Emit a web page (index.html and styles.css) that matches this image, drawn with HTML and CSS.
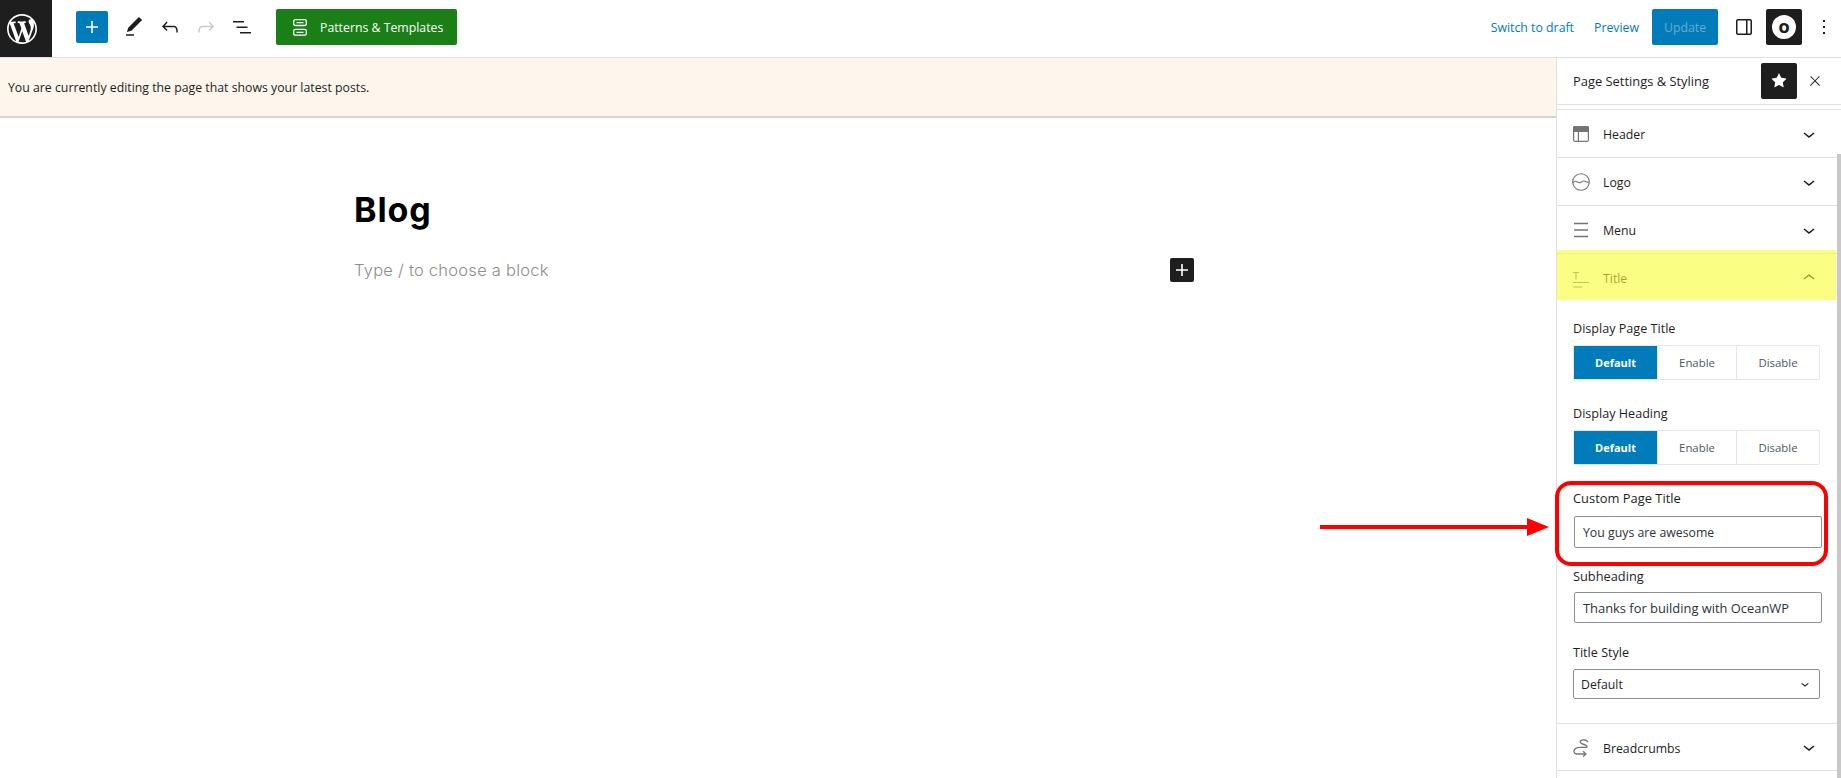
FILE: index.html
```html
<!DOCTYPE html>
<html lang="en">
<head>
  <meta charset="UTF-8" />
  <title>Edit Page - Blog</title>
  <link rel="stylesheet" href="styles.css">
</head>
<body>
  <div class="app">
    <header class="topbar">
      <div class="wp-logo">
        <svg viewBox="-2 -2 24 24" width="36" height="36"><path fill="#fff" d="M20 10c0-5.51-4.49-10-10-10C4.48 0 0 4.49 0 10c0 5.52 4.48 10 10 10 5.51 0 10-4.48 10-10zM7.78 15.37L4.37 6.22c.55-.02 1.17-.08 1.17-.08.5-.06.44-1.13-.06-1.11 0 0-1.45.11-2.37.11-.18 0-.37 0-.58-.01C4.12 2.69 6.87 1.11 10 1.11c2.33 0 4.45.87 6.05 2.34-.68-.11-1.65.39-1.65 1.58 0 .74.45 1.36.9 2.1.35.61.55 1.36.55 2.46 0 1.49-1.4 5-1.4 5l-3.03-8.37c.54-.02.82-.17.82-.17.5-.05.44-1.25-.06-1.22 0 0-1.44.12-2.38.12-.87 0-2.33-.12-2.33-.12-.5-.03-.56 1.2-.06 1.22l.92.08 1.26 3.41zM17.41 10c.24-.64.74-1.87.43-4.25.7 1.29 1.05 2.71 1.05 4.25 0 3.29-1.73 6.24-4.4 7.78.97-2.59 1.94-5.2 2.92-7.78zM6.1 18.09C3.12 16.65 1.11 13.53 1.11 10c0-1.3.23-2.48.72-3.59C3.25 10.3 4.67 14.2 6.1 18.09zm4.03-6.63l2.58 6.98c-.86.29-1.76.45-2.71.45-.79 0-1.57-.11-2.29-.33.81-2.38 1.62-4.74 2.42-7.1z"/></svg>
      </div>
      <div class="tools">
        <button class="add-btn"><svg viewBox="0 0 24 24" width="24" height="24"><path fill="#fff" d="M18 11.2h-5.2V6h-1.6v5.2H6v1.6h5.2V18h1.6v-5.2H18z"/></svg></button>
        <svg class="tool" viewBox="0 0 24 24" width="24" height="24"><path fill="#1e1e1e" d="M20.1 5.1L16.9 2 6.2 12.7l-1.3 4.4 4.5-1.3L20.1 5.1zM4 20.8h8v-1.5H4v1.5z"/></svg>
        <svg class="tool" viewBox="0 0 24 24" width="24" height="24"><path fill="#1e1e1e" d="M18.3 11.7c-.6-.6-1.4-.9-2.3-.9H6.7l2.9-3.3-1.1-1-4.5 5L8.5 16l1-1-2.7-2.7H16c.5 0 .9.2 1.3.5 1 1 1 3.4 1 4.5v.3h1.5v-.2c0-1.5 0-4.3-1.5-5.7z"/></svg>
        <svg class="tool" viewBox="0 0 24 24" width="24" height="24"><path fill="#ccc" d="M15.6 6.5l-1.1 1 2.9 3.3H8c-.9 0-1.7.3-2.3.9-1.4 1.5-1.4 4.2-1.4 5.6v.2h1.5v-.3c0-1.1 0-3.5 1-4.5.3-.3.7-.5 1.3-.5h9.2L14.5 15l1.1 1.1 4.6-4.6-4.6-5z"/></svg>
        <svg class="tool" viewBox="0 0 24 24" width="24" height="24"><path fill="#1e1e1e" d="M3 6h11v1.5H3V6Zm3.5 5.5h11V13h-11v-1.5ZM21 17H10v1.5h11V17Z"/></svg>
        <button class="patterns-btn">
          <svg viewBox="0 0 14 17" width="14" height="17" fill="none" stroke="#fff" stroke-width="1.3"><rect x="0.7" y="0.7" width="12.6" height="5.8" rx="1.5"/><rect x="0.7" y="10.4" width="12.6" height="5.8" rx="1.5"/><path d="M3.5 3.6h7M3.5 13.3h7"/></svg>
          Patterns &amp; Templates
        </button>
      </div>
      <div class="actions">
        <a class="link-btn">Switch to draft</a>
        <a class="link-btn">Preview</a>
        <button class="update-btn">Update</button>
        <svg class="panel-icon" viewBox="0 0 24 24" width="24" height="24"><path fill="#1e1e1e" d="M18 4H6c-1.1 0-2 .9-2 2v12c0 1.1.9 2 2 2h12c1.1 0 2-.9 2-2V6c0-1.1-.9-2-2-2zm-4 14.5H6c-.3 0-.5-.2-.5-.5V6c0-.3.2-.5.5-.5h8v13zm4.5-.5c0 .3-.2.5-.5.5h-2.5v-13H18c.3 0 .5.2.5.5v12z"/></svg>
        <div class="ocean-btn"><span class="ocean-o">O</span></div>
        <svg class="more-icon" viewBox="0 0 24 24" width="24" height="24"><path fill="#1e1e1e" d="M13 19h-2v-2h2v2zm0-6h-2v-2h2v2zm0-6h-2V5h2v2z"/></svg>
      </div>
    </header>

    <div class="main">
      <div class="editor">
        <div class="notice">You are currently editing the page that shows your latest posts.</div>
        <div class="canvas">
          <h1 class="page-title">Blog</h1>
          <div class="empty-block">
            <span class="placeholder">Type / to choose a block</span>
            <button class="inserter"><svg viewBox="0 0 24 24" width="24" height="24"><path fill="#fff" d="M18 11.2h-5.2V6h-1.6v5.2H6v1.6h5.2V18h1.6v-5.2H18z"/></svg></button>
          </div>
        </div>
      </div>

      <aside class="sidebar">
        <div class="sidebar-head">
          <span class="sidebar-title">Page Settings &amp; Styling</span>
          <div class="star-btn"><svg viewBox="0 0 24 24" width="24" height="24"><path fill="#fff" d="M11.776 4.454a.25.25 0 01.448 0l2.069 4.192a.25.25 0 00.188.137l4.626.672a.25.25 0 01.139.426l-3.348 3.263a.25.25 0 00-.072.222l.79 4.607a.25.25 0 01-.362.263l-4.138-2.175a.25.25 0 00-.232 0l-4.138 2.175a.25.25 0 01-.363-.263l.79-4.607a.25.25 0 00-.071-.222L4.754 9.881a.25.25 0 01.139-.426l4.626-.672a.25.25 0 00.188-.137l2.069-4.192z"/></svg></div>
          <svg class="close-icon" viewBox="0 0 24 24" width="16" height="16"><path fill="#1e1e1e" d="M13 11.8l6.1-6.3-1-1-6.1 6.2-6.1-6.2-1 1 6.1 6.3-6.5 6.7 1 1 6.5-6.6 6.5 6.6 1-1z"/></svg>
        </div>

        <div class="panel-row">
          <svg class="row-icon" viewBox="0 0 16 16"><path fill="#757575" d="M1.5 0h13A1.5 1.5 0 0 1 16 1.5V6H0V1.5A1.5 1.5 0 0 1 1.5 0Z"/><rect x="0.6" y="0.6" width="14.8" height="14.8" rx="1.5" fill="none" stroke="#757575" stroke-width="1.2"/><path fill="#757575" d="M4.8 6H6v9.5H4.8z"/></svg>
          <span class="row-label">Header</span>
          <svg class="chevron" viewBox="0 0 24 24"><path d="M17.5 11.6L12 16l-5.5-4.4.9-1.2L12 14l4.5-3.6 1 1.2z"/></svg>
        </div>
        <div class="panel-row">
          <svg class="row-icon row-icon-logo" viewBox="0 0 18 18" fill="none" stroke="#757575" stroke-width="1.1"><circle cx="9" cy="9" r="8.3"/><path d="M1 10c1-1.800 2.500-2.300 4-1.300s2.500 1.700 4 .6 2.500-2 4-1 2.500 1.500 4 .7"/></svg>
          <span class="row-label">Logo</span>
          <svg class="chevron" viewBox="0 0 24 24"><path d="M17.5 11.6L12 16l-5.5-4.4.9-1.2L12 14l4.5-3.6 1 1.2z"/></svg>
        </div>
        <div class="panel-row">
          <svg class="row-icon" viewBox="0 0 16 16" fill="none" stroke="#757575" stroke-width="1.3"><path d="M1 1.5h14M1 8h14M1 14.5h14"/></svg>
          <span class="row-label">Menu</span>
          <svg class="chevron" viewBox="0 0 24 24"><path d="M17.5 11.6L12 16l-5.5-4.4.9-1.2L12 14l4.5-3.6 1 1.2z"/></svg>
        </div>
        <div class="panel-row panel-row-open">
          <svg class="row-icon row-icon-title" viewBox="0 0 16 18" fill="none" stroke="#757575" stroke-width="1.1"><path d="M0 11.5h16M0 16h9M0 1.5h6M3 1.5v7"/></svg>
          <span class="row-label">Title</span>
          <svg class="chevron" viewBox="0 0 24 24"><path d="M6.5 12.4L12 8l5.5 4.4-.9 1.2L12 10l-4.500 3.600-1-1.200z"/></svg>
        </div>

        <div class="panel-body">
          <div class="field">
            <div class="field-label">Display Page Title</div>
            <div class="btn-group">
              <span class="seg seg-active">Default</span>
              <span class="seg">Enable</span>
              <span class="seg">Disable</span>
            </div>
          </div>
          <div class="field">
            <div class="field-label">Display Heading</div>
            <div class="btn-group">
              <span class="seg seg-active">Default</span>
              <span class="seg">Enable</span>
              <span class="seg">Disable</span>
            </div>
          </div>
          <div class="field field-custom">
            <div class="field-label">Custom Page Title</div>
            <div class="text-input">You guys are awesome</div>
          </div>
          <div class="field field-sub">
            <div class="field-label">Subheading</div>
            <div class="text-input">Thanks for building with OceanWP</div>
          </div>
          <div class="field field-last">
            <div class="field-label">Title Style</div>
            <div class="select-input">
              Default
              <svg viewBox="0 0 24 24" width="16" height="16"><path fill="#1e1e1e" d="M17.5 11.6L12 16l-5.5-4.4.9-1.2L12 14l4.5-3.6 1 1.2z"/></svg>
            </div>
          </div>
        </div>

        <div class="panel-row panel-row-top">
          <svg class="row-icon row-icon-crumbs" viewBox="0 0 16 18" fill="none" stroke="#757575" stroke-width="1.3"><path d="M15 3C14 1 9 0 7.5 2 6.500 4 9 5 11 5.500 14 6.300 15 8 13 8.300 10 8.800 5 7.500 2.500 9.500 0 11.500 .5 14.800 3.500 15H12.500"/><path d="M10 12.300L13 15 10 17.700"/></svg>
          <span class="row-label">Breadcrumbs</span>
          <svg class="chevron" viewBox="0 0 24 24"><path d="M17.5 11.6L12 16l-5.5-4.4.9-1.2L12 14l4.5-3.6 1 1.2z"/></svg>
        </div>

        <div class="scroll-thumb"></div>
      </aside>
    </div>

    <!-- screenshot annotations, they sit on top of the page -->
    <div class="highlight"></div>
    <div class="red-ring"></div>
    <svg class="red-arrow" viewBox="0 0 229 18" width="229" height="18"><path fill="#f00" d="M0 7h207V0l22 9-22 9v-7L0 11z"/></svg>
  </div>
</body>
</html>
```

FILE: styles.css
```css
* {
  box-sizing: border-box;
}
body {
  margin: 0;
  font-family: 'Open Sans', 'Noto Sans', sans-serif;
  font-size: 12.3px;
  color: #1e1e1e;
  background: #fff;
  overflow: hidden;
}
button {
  border: none;
  padding: 0;
  font-family: inherit;
}
.app {
  position: relative;
  width: 1841px;
  height: 778px;
  overflow: hidden;
}

/* top bar */
.topbar {
  display: flex;
  align-items: center;
  height: 58px;
  padding-bottom: 3px;
  border-bottom: 1px solid #e0e0e0;
}
.wp-logo {
  display: flex;
  align-items: center;
  align-self: flex-start;
  justify-content: center;
  width: 52px;
  height: 57px;
  padding-right: 8px;
  background: #1e1e1e;
}
.tools {
  display: flex;
  align-items: center;
  margin-left: 24px;
}
.add-btn {
  display: flex;
  align-items: center;
  justify-content: center;
  width: 32px;
  height: 32px;
  background: #007cba;
  border-radius: 2px;
  margin-right: 14px;
}
.tool {
  margin-right: 12px;
}
.patterns-btn {
  display: flex;
  align-items: center;
  gap: 13px;
  width: 181px;
  height: 36px;
  padding-left: 17px;
  margin-left: 10px;
  background: #1a7f16;
  color: #fff;
  font-size: 12.3px;
  border-radius: 2px;
}
.actions {
  display: flex;
  align-items: center;
  margin-left: auto;
}
.link-btn {
  color: #007cba;
  margin-right: 20px;
}
.update-btn {
  width: 66px;
  height: 36px;
  background: #007cba;
  color: #6fa9cf;
  font-size: 12.3px;
  border-radius: 2px;
  margin-left: -7px;
}
.panel-icon {
  margin-left: 14px;
}
.ocean-btn {
  display: flex;
  align-items: center;
  justify-content: center;
  width: 36px;
  height: 36px;
  margin-left: 10px;
  background: #1e1e1e;
  border-radius: 2px;
}
.ocean-o {
  display: flex;
  align-items: center;
  justify-content: center;
  width: 24px;
  height: 24px;
  border-radius: 50%;
  background: #fff;
  color: #1e1e1e;
  font-size: 14px;
  font-weight: 800;
}
.more-icon {
  margin-left: 10px;
  margin-right: 5px;
}

/* main area */
.main {
  display: flex;
  height: 720px;
}
.editor {
  flex: 1;
}
.notice {
  display: flex;
  align-items: center;
  height: 60px;
  padding-left: 8px;
  background: #fef6ec;
  border-bottom: 2px solid #d6d4ce;
}
.canvas {
  padding: 72px 0 0 354px;
}
.page-title {
  margin: 0;
  font-family: 'Inter', sans-serif;
  font-size: 34px;
  font-weight: 700;
  line-height: 40px;
  letter-spacing: .9px;
  color: #000;
}
.empty-block {
  display: flex;
  align-items: center;
  justify-content: space-between;
  width: 840px;
  margin-top: 28px;
}
.placeholder {
  font-family: 'Inter', sans-serif;
  font-size: 16.5px;
  font-weight: 300;
  letter-spacing: .25px;
  color: #8c8c8c;
}
.inserter {
  display: flex;
  align-items: center;
  justify-content: center;
  width: 24px;
  height: 24px;
  background: #1e1e1e;
  border-radius: 2px;
}

/* sidebar */
.sidebar {
  position: relative;
  width: 285px;
  border-left: 1px solid #e0e0e0;
}
.sidebar-head {
  display: flex;
  align-items: center;
  height: 47px;
  padding-left: 16px;
  border-bottom: 1px solid #e0e0e0;
  margin-bottom: 4px;
}
.sidebar-title {
  font-size: 12.9px;
  font-weight: 500;
}
.star-btn {
  display: flex;
  align-items: center;
  justify-content: center;
  width: 36px;
  height: 36px;
  margin-left: auto;
  background: #1e1e1e;
  border-radius: 2px;
}
.close-icon {
  margin: 0 18px 0 10px;
}
.panel-row {
  display: flex;
  align-items: center;
  height: 48px;
  padding: 0 20px 0 16px;
  border-top: 1px solid #e0e0e0;
}
.panel-row-top {
  border-bottom: 1px solid #e0e0e0;
}
.row-icon {
  width: 16px;
  height: 16px;
  margin-right: 15px;
  flex-shrink: 0;
}
.row-icon-logo {
  width: 18px;
  height: 18px;
  margin: 0 14px 0 -1px;
}
.row-icon-title {
  height: 18px;
  margin-top: 4px;
}
.row-icon-crumbs {
  height: 18px;
  margin-top: 2px;
}
.row-label {
  font-weight: 500;
  flex: 1;
  margin-top: 2px;
  margin-left: -1px;
}
.chevron {
  width: 24px;
  height: 24px;
  fill: #1e1e1e;
}
.panel-body {
  padding: 19px 16px 0 16px;
}
.field {
  margin-bottom: 25px;
  width: 247px;
}
.field-custom {
  margin-bottom: 20px;
}
.field-sub {
  margin-bottom: 21px;
}
.field-last {
  margin-bottom: 24px;
}
.field-label {
  height: 16px;
  line-height: 18px;
  margin-bottom: 9px;
  font-size: 12.6px;
  font-weight: 500;
}
.field-custom .field-label {
  line-height: 16px;
  margin-bottom: 10px;
  font-size: 12.9px;
}
.field-sub .field-label {
  line-height: 16px;
  margin-bottom: 8px;
  font-size: 12.8px;
}
.btn-group {
  display: grid;
  grid-template-columns: 83px 79px 83px;
  height: 35px;
  border: 1px solid #e5e5e5;
  border-radius: 2px;
}
.seg {
  display: flex;
  align-items: center;
  justify-content: center;
  font-size: 11.4px;
  color: #50575e;
  border-left: 1px solid #e5e5e5;
}
.seg-active {
  background: #007cba;
  color: #fff;
  font-size: 11px;
  font-weight: 700;
  border-left: none;
}
.text-input {
  display: flex;
  align-items: center;
  height: 32px;
  width: 248px;
  margin-left: 1px;
  padding-left: 8px;
  border: 1px solid #8c8f94;
  border-radius: 2px;
  color: #2c3338;
}
.field-sub .text-input {
  height: 31px;
  font-size: 12.9px;
}
.select-input {
  display: flex;
  align-items: center;
  justify-content: space-between;
  height: 30px;
  padding: 0 6px 0 7px;
  border: 1px solid #8c8f94;
  border-radius: 2px;
}
.scroll-thumb {
  position: absolute;
  top: 96px;
  right: 0;
  width: 4px;
  height: 640px;
  background: #c8c8c8;
}

/* annotations */
.highlight {
  position: absolute;
  left: 1557px;
  top: 250px;
  width: 279px;
  height: 50px;
  background: rgba(247, 255, 50, 0.6);
}
.red-ring {
  position: absolute;
  left: 1555px;
  top: 481px;
  width: 273px;
  height: 85px;
  border: 4px solid #f00;
  border-radius: 16px;
}
.red-arrow {
  position: absolute;
  left: 1320px;
  top: 518px;
}
```
